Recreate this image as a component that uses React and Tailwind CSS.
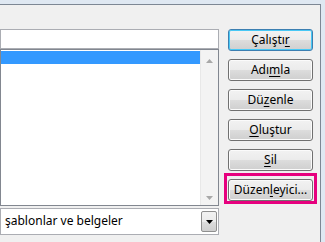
import React from "react";

function Btn({ children, primary }) {
    return (
        <div
            className={
                "h-[22px] w-[85px] shrink-0 rounded-[3px] border flex items-center justify-center leading-none bg-[linear-gradient(to_bottom,#f2f2f2_0%,#ebebeb_50%,#dddddd_50%,#cfcfcf_100%)] " +
                (primary
                    ? "border-[#3c7fb1] shadow-[inset_0_0_0_1px_#48c8f5]"
                    : "border-[#707070] shadow-[inset_0_0_0_1px_#fbfbfb]")
            }
        >
            <span className="pb-[1px]">{children}</span>
        </div>
    );
}

function Arrow({ down }) {
    return (
        <svg width="7" height="4" viewBox="0 0 7 4">
            <path d={down ? "M0 0 H7 L3.5 4 Z" : "M0 4 H7 L3.5 0 Z"} fill="#a8a8a8" />
        </svg>
    );
}

export default function App() {
    return (
        <div className="w-[325px] h-[242px] flex flex-col bg-[#dfe8f2] overflow-hidden font-['Noto_Sans',sans-serif] text-[12px] text-black">
            <div className="h-[4px] shrink-0" />

            <div className="flex-1 flex min-h-0">
                <div className="w-[321px] border-t border-r border-[#7d8794] bg-[#f0f0f0] flex">
                    {/* left side */}
                    <div className="w-[219px] flex flex-col pt-[24px]">
                        <div className="h-[20px] border border-[#abadb3] bg-white" />

                        <div className="h-[157px] border border-[#828790] bg-white flex">
                            <div className="flex-1">
                                <div className="h-[13px] mt-[1px] bg-[#3399ff]" />
                            </div>
                            <div className="w-[18px] bg-[#f3f3f3] border-l border-[#e8e8e8] flex flex-col items-center justify-between pt-[9px] pb-[5px]">
                                <Arrow />
                                <Arrow down />
                            </div>
                        </div>

                        <div className="mt-[2px] h-[27px] border border-[#abadb3] bg-white flex items-center">
                            <span className="pl-[4px] pb-[1px]">şablonlar ve belgeler</span>
                            <div className="ml-auto mr-[1px] w-[16px] h-[21px] border border-[#8f8f8f] rounded-[2px] flex items-center justify-center bg-[linear-gradient(to_bottom,#f2f2f2_0%,#ebebeb_50%,#dddddd_50%,#cfcfcf_100%)]">
                                <svg width="7" height="4" viewBox="0 0 7 4">
                                    <path d="M0 0 H7 L3.5 4 Z" fill="#000" />
                                </svg>
                            </div>
                        </div>
                    </div>

                    {/* buttons */}
                    <div className="ml-[9px] w-[85px] flex flex-col pt-[24px]">
                        <Btn primary>
                            Çalıştı<span className="underline underline-offset-2">r</span>
                        </Btn>
                        <div className="h-[8px]" />
                        <Btn>
                            Adı<span className="underline underline-offset-2">m</span>la
                        </Btn>
                        <div className="h-[8px]" />
                        <Btn>
                            Dü<span className="underline underline-offset-2">z</span>enle
                        </Btn>
                        <div className="h-[8px]" />
                        <Btn>
                            <span className="underline underline-offset-2">O</span>luştur
                        </Btn>
                        <div className="h-[8px]" />
                        <Btn>
                            <span className="underline underline-offset-2">S</span>il
                        </Btn>
                        <div className="-mx-[4px] mt-[2px] border-[3px] border-[#e6007e] pt-[3px] px-[1px]">
                            <Btn>
                                Düzen<span className="underline underline-offset-2">l</span>eyici...
                            </Btn>
                        </div>
                    </div>
                </div>
            </div>
        </div>
    );
}
